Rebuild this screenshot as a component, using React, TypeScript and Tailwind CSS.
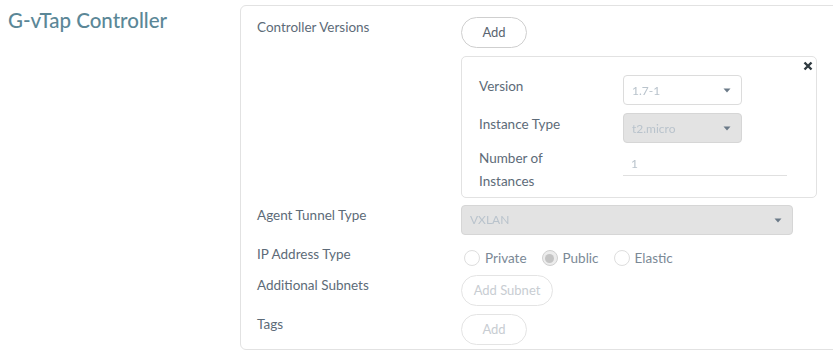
import React from "react";

const font = { fontFamily: "Lato, 'Open Sans', sans-serif" };

function Caret() {
  return (
    <svg width="8" height="5" viewBox="0 0 8 5" className="shrink-0">
      <path d="M0.5 0.5 H7.5 L4 4.5 Z" fill="#6b7a88" />
    </svg>
  );
}

function SelectBox({
  value,
  disabled,
  width,
}: {
  value: string;
  disabled?: boolean;
  width: string;
}) {
  return (
    <div
      className={`flex h-[30px] items-center justify-between rounded-[4px] border pl-[8px] pr-[10px] ${width} ${
        disabled ? "border-[#d6d6d6] bg-[#e3e3e3]" : "border-[#dcdcdc] bg-white"
      }`}
    >
      <span className="text-[12px] text-[#b9c3cc] blur-[0.5px]">{value}</span>
      <Caret />
    </div>
  );
}

function Radio({ label, checked }: { label: string; checked?: boolean }) {
  return (
    <label className="flex items-center gap-[5px]">
      <span
        className={`flex h-[16px] w-[16px] items-center justify-center rounded-full border ${
          checked ? "border-[#d0d0d0] bg-[#ececec]" : "border-[#dedede] bg-white"
        }`}
      >
        {checked && <span className="h-[9px] w-[9px] rounded-full bg-[#c4c4c4]" />}
      </span>
      <span className="text-[13.5px] text-[#7b8996]">{label}</span>
    </label>
  );
}

function PillButton({
  children,
  width,
  disabled,
}: {
  children: React.ReactNode;
  width: string;
  disabled?: boolean;
}) {
  return (
    <button
      className={`h-[31px] rounded-full border text-[13px] ${width} ${
        disabled
          ? "border-[#e4e4e4] text-[#c8cdd2]"
          : "border-[#cfcfcf] text-[#5a6570]"
      }`}
    >
      {children}
    </button>
  );
}

const labelCls = "w-[204px] shrink-0 text-[13.5px] leading-[20px] text-[#5d6b78]";

export default function App() {
  return (
    <div className="flex h-[353px] w-[833px] overflow-hidden bg-white" style={font}>
      <div className="w-[240px] shrink-0 pl-[8px] pt-[5px]">
        <h1 className="text-[20.5px] font-medium text-[#5b8797]">G-vTap Controller</h1>
      </div>

      <div className="mt-[5px] h-[345px] w-[620px] shrink-0 rounded-[6px] border border-[#e2e2e2] pl-[16px] pt-[11px]">
        <div className="flex">
          <div className={labelCls}>Controller Versions</div>
          <div className="flex flex-col gap-[8px]">
            <PillButton width="w-[66px]">Add</PillButton>
            <div className="relative w-[356px] rounded-[5px] border border-[#e2e2e2] pb-[4px] pl-[17px] pt-[18px]">
              <svg
                width="10"
                height="10"
                viewBox="0 0 10 10"
                className="absolute right-[3px] top-[4px]"
              >
                <path d="M1.5 1.5 L8.5 8.5 M8.5 1.5 L1.5 8.5" stroke="#2f3a40" strokeWidth="2.4" />
              </svg>
              <div className="flex flex-col text-[13.5px] leading-[23px] text-[#5d6b78]">
                <div className="flex">
                  <div className="w-[144px]">Version</div>
                  <SelectBox value="1.7-1" width="w-[119px]" />
                </div>
                <div className="mt-[8px] flex">
                  <div className="w-[144px]">Instance Type</div>
                  <SelectBox value="t2.micro" disabled width="w-[119px]" />
                </div>
                <div className="mt-[4px] flex">
                  <div className="w-[144px]">
                    Number of
                    <br />
                    Instances
                  </div>
                  <div className="flex h-[29px] w-[164px] items-center border-b border-[#e0e0e0] pl-[8px] pt-[4px]">
                    <span className="text-[12px] text-[#b9c3cc] blur-[0.5px]">1</span>
                  </div>
                </div>
              </div>
            </div>
          </div>
        </div>

        <div className="mt-[7px] flex">
          <div className={labelCls}>Agent Tunnel Type</div>
          <SelectBox value="VXLAN" disabled width="w-[332px]" />
        </div>

        <div className="mt-[9px] flex">
          <div className={labelCls}>IP Address Type</div>
          <div className="flex h-[26px] items-center gap-[15px] pl-[3px] pt-[2px]">
            <Radio label="Private" />
            <Radio label="Public" checked />
            <Radio label="Elastic" />
          </div>
        </div>

        <div className="mt-[5px] flex">
          <div className={labelCls}>Additional Subnets</div>
          <PillButton width="w-[92px]" disabled>
            Add Subnet
          </PillButton>
        </div>

        <div className="mt-[8px] flex">
          <div className={labelCls}>Tags</div>
          <PillButton width="w-[66px]" disabled>
            Add
          </PillButton>
        </div>
      </div>
    </div>
  );
}
